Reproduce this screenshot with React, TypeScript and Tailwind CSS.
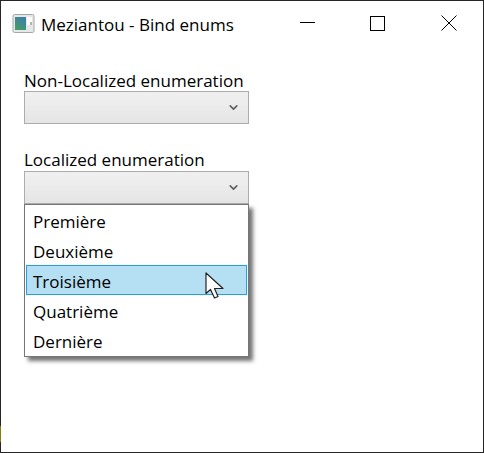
import { ChevronDown } from 'lucide-react';

const ITEMS = ['Première', 'Deuxième', 'Troisième', 'Quatrième', 'Dernière'];

function ComboBox() {
  return (
    <div className="flex h-[33px] w-[225px] items-center justify-end border border-[#acacac] bg-gradient-to-b from-[#f0f0f0] to-[#e5e5e5] pr-[8px]">
      <ChevronDown className="h-[13px] w-[13px] text-[#606060]" strokeWidth={3} />
    </div>
  );
}

export default function App() {
  return (
    <div className="relative flex h-[453px] w-[484px] flex-col border border-[#262626] bg-white font-['Open_Sans','Noto_Sans',sans-serif] text-[17px] text-black">
      {/* Title bar */}
      <div className="flex h-[44px] shrink-0 items-center pl-[11px]">
        <svg width="23" height="20" viewBox="0 0 23 20" className="mr-[6px] mt-[1px] shrink-0">
          <defs>
            <linearGradient id="appIcon" x1="0" y1="1" x2="0.6" y2="0">
              <stop offset="0%" stopColor="#46a05c" />
              <stop offset="100%" stopColor="#3d7fa8" />
            </linearGradient>
          </defs>
          <rect x="1" y="0.5" width="21" height="18" rx="1.5" fill="#e6e8e8" stroke="#a5a7a7" />
          <rect x="3" y="3" width="11" height="13" fill="url(#appIcon)" />
          <rect x="15" y="3" width="5" height="8" fill="#ffffff" />
          <rect x="18" y="8" width="2" height="3" fill="#b0b4b4" />
        </svg>
        <span className="mt-[2px] leading-none">Meziantou - Bind enums</span>
        <div className="ml-auto flex h-full">
          <div className="flex w-[70px] items-center justify-center pb-px pr-[2px]">
            <div className="h-px w-[15px] bg-black" />
          </div>
          <div className="flex w-[70px] items-center justify-center pr-px">
            <div className="h-[15px] w-[15px] border border-black" />
          </div>
          <div className="flex w-[70px] items-center justify-center pl-[2px]">
            <svg width="16" height="16" viewBox="0 0 16 16" fill="none" stroke="#000" strokeWidth="1">
              <path d="M0.5 0.5 15.5 15.5M15.5 0.5 0.5 15.5" />
            </svg>
          </div>
        </div>
      </div>

      {/* Content */}
      <div className="relative flex flex-col pl-[23px]">
        <div className="mt-[25px] h-[21px] leading-[21px]">Non-Localized enumeration</div>
        <ComboBox />
        <div className="mt-[25px] h-[22px] leading-[21px]">Localized enumeration</div>
        <ComboBox />

        {/* Dropdown popup */}
        <div className="absolute left-[23px] top-[159px] w-[225px] border border-[#767676] bg-white px-px pb-px shadow-[4px_4px_4px_rgba(0,0,0,0.55)]">
          {ITEMS.map((item) => (
            <div
              key={item}
              className={
                item === 'Troisième'
                  ? 'flex h-[30px] items-center border border-[#26a0da] bg-[#b5dff2] pl-[6px] pt-[4px]'
                  : 'flex h-[30px] items-center border border-transparent pl-[6px] pt-[4px]'
              }
            >
              {item}
            </div>
          ))}
        </div>

        {/* Mouse pointer */}
        <svg className="absolute left-[204px] top-[227px]" width="20" height="28" viewBox="0 0 20 28">
          <path
            d="M1 1 L1 21.5 L5.5 17.5 L9.5 26 L13 24.5 L9.5 16.5 L18 16.5 Z"
            fill="#fff"
            stroke="#222"
            strokeWidth="1.2"
            strokeLinejoin="round"
          />
        </svg>
      </div>

      {/* Desktop showing at the window's left edge */}
      <div className="absolute left-[-1px] top-[425px] h-[16px] w-px bg-[#8a7a10]" />
    </div>
  );
}
